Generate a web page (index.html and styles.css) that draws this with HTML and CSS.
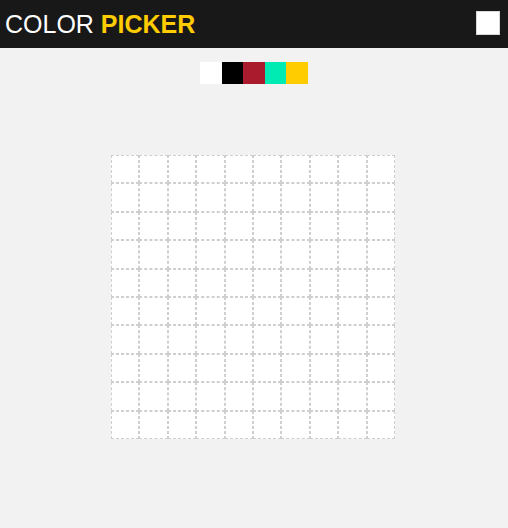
FILE: index.html
```html
<!DOCTYPE html>
<html>
<head>
<meta charset="utf-8">
<link rel="stylesheet" href="styles.css">
</head>
<body>
<header class="topbar">
  <h1 class="title">COLOR <span class="accent">PICKER</span></h1>
  <div class="current"></div>
</header>
<div class="palette">
  <div class="swatch white"></div>
  <div class="swatch black"></div>
  <div class="swatch red"></div>
  <div class="swatch teal"></div>
  <div class="swatch yellow"></div>
</div>
<div class="board" id="board"></div>
<script>
  var b = document.getElementById('board');
  for (var i = 0; i < 100; i++) { var c = document.createElement('div'); c.className = 'cell'; b.appendChild(c); }
</script>
</body>
</html>
```
FILE: styles.css
```css
html, body { margin: 0; padding: 0; }
body {
  background: #f2f2f2;
  font-family: "Liberation Sans", Arial, sans-serif;
  height: 528px;
}
.topbar {
  height: 48px;
  background: #181818;
  display: flex;
  align-items: center;
  justify-content: space-between;
  padding: 0 8px 0 5px;
  box-sizing: border-box;
}
.title {
  margin: 0;
  font-size: 25px;
  font-weight: normal;
  color: #ffffff;
  line-height: 1;
  padding-top: 1px;
}
.accent { color: #ffcc00; font-weight: bold; }
.current {
  width: 24px;
  height: 24px;
  background: #fff;
  box-sizing: border-box;
  border: 1px solid #d8d8d8;
  margin-top: -2px;
}
.palette {
  display: flex;
  justify-content: center;
  margin-top: 14px;
}
.swatch { width: 21.6px; height: 22px; }
.white { background: #ffffff; }
.black { background: #000000; }
.red { background: #a91b2d; }
.teal { background: #00ebb4; }
.yellow { background: #ffcc00; }
.board {
  width: 284px;
  margin: 71px auto 0;
  display: grid;
  grid-template-columns: repeat(10, 1fr);
  transform: translateX(-1px);
}
.cell {
  height: 28.4px;
  box-sizing: border-box;
  background: #fff;
  border: 1px dashed #cfcfcf;
}
```
